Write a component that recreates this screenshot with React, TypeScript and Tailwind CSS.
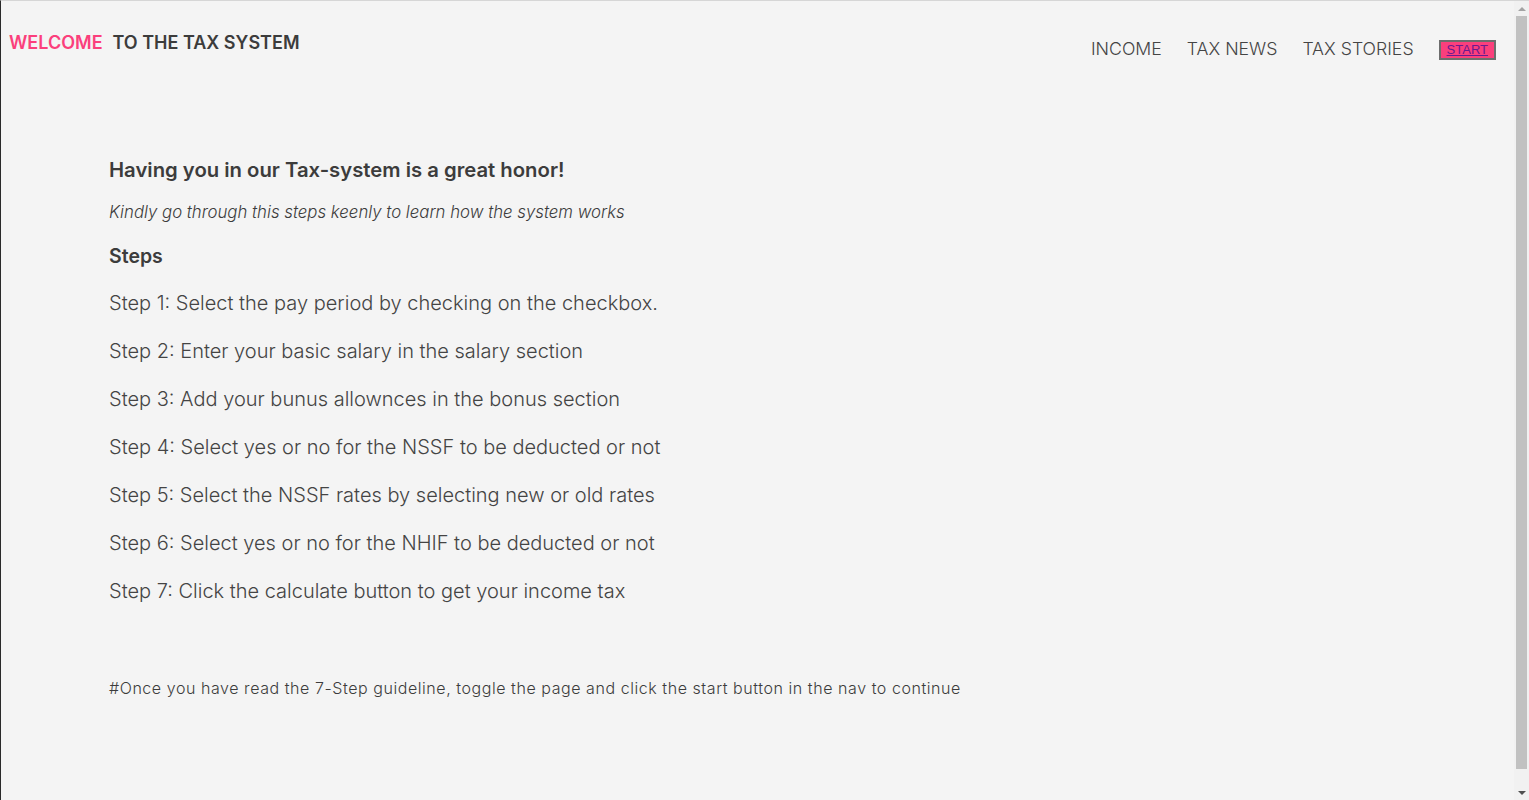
const steps = [
  "Step 1: Select the pay period by checking on the checkbox.",
  "Step 2: Enter your basic salary in the salary section",
  "Step 3: Add your bunus allownces in the bonus section",
  "Step 4: Select yes or no for the NSSF to be deducted or not",
  "Step 5: Select the NSSF rates by selecting new or old rates",
  "Step 6: Select yes or no for the NHIF to be deducted or not",
  "Step 7: Click the calculate button to get your income tax",
]

// fake browser scrollbar, the page in the shot is a bit taller than the window
const Scrollbar = () => (
  <div className="w-[15px] shrink-0 bg-[#f1f1f1] flex flex-col items-center">
    <div className="h-[15px] flex items-center justify-center">
      <div className="w-0 h-0 border-l-[4px] border-r-[4px] border-b-[4px] border-l-transparent border-r-transparent border-b-[#a3a3a3]" />
    </div>
    <div className="w-[11px] flex-1 bg-[#c1c1c1] mb-[16px]" />
    <div className="h-[15px] flex items-center justify-center">
      <div className="w-0 h-0 border-l-[4px] border-r-[4px] border-t-[4px] border-l-transparent border-r-transparent border-t-[#505050]" />
    </div>
  </div>
)

const App = () => {
  return (
    <div className="h-[800px] flex bg-[#f4f4f4] border-t border-t-[#d6d6d6] border-l border-l-[#2a2a2a] text-[#3c3c3c] font-['Inter',sans-serif] overflow-hidden">
      <div className="flex-1">
        <header className="flex justify-between items-start">
          <h1 className="pl-2 pt-[28px] text-[18px] font-semibold">
            <span className="text-[#fb3f7c]">WELCOME</span>
            <span className="ml-[10px]">TO THE TAX SYSTEM</span>
          </h1>
          <nav className="flex items-center pt-[35px] pr-[18px]">
            <ul className="flex items-center gap-[25px] text-[17.7px] font-light text-[#444]">
              <li>INCOME</li>
              <li>TAX NEWS</li>
              <li>TAX STORIES</li>
            </ul>
            <button className="ml-[25px] mt-[1px] h-[20px] px-[6px] bg-[#fb3f7c] border-2 border-[#6d6d6d] font-['Liberation_Sans',sans-serif] text-[13px] leading-none text-[#6b1a8f] underline">
              START
            </button>
          </nav>
        </header>

        <main className="pl-[108px] pt-[93px]">
          <h2 className="text-[20.3px] font-semibold leading-[28px]">Having you in our Tax-system is a great honor!</h2>
          <p className="mt-[16px] text-[16.8px] italic font-light">Kindly go through this steps keenly to learn how the system works</p>
          <h3 className="mt-[17px] text-[19.5px] font-semibold">Steps</h3>
          <ul className="mt-[18px] flex flex-col gap-[20px] text-[20px] font-light text-[#444]">
            {steps.map((s) => (
              <li key={s} className="leading-[28px]">{s}</li>
            ))}
          </ul>
          <p className="mt-[71px] text-[16px] tracking-[0.035em] font-light">
            #Once you have read the 7-Step guideline, toggle the page and click the start button in the nav to continue
          </p>
        </main>
      </div>
      <Scrollbar />
    </div>
  )
}

export default App
